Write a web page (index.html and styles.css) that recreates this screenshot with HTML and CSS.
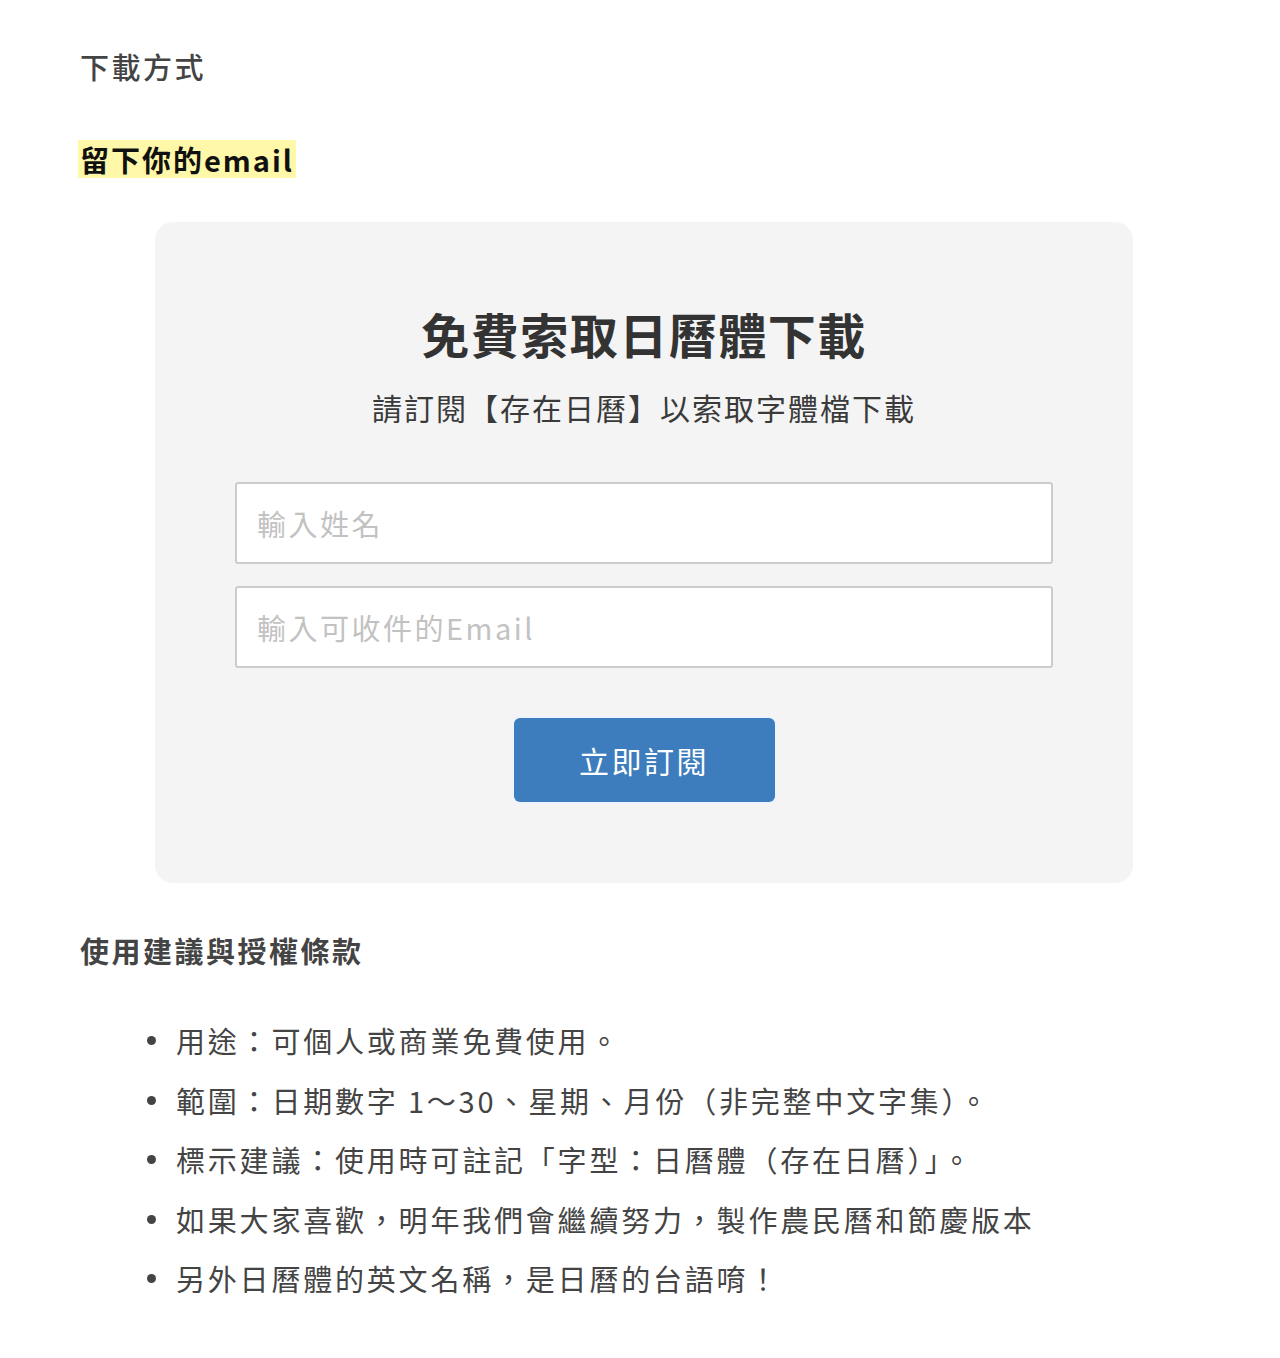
FILE: index.html
```html
<!DOCTYPE html>
<html lang="zh-Hant">
<head>
<meta charset="utf-8">
<title>下載方式</title>
<link rel="stylesheet" href="styles.css">
</head>
<body>
<main class="page">
  <h2 class="section-title">下載方式</h2>
  <p class="highlight-line"><mark class="highlight">留下你的email</mark></p>

  <section class="card">
    <h1 class="card-title">免費索取日曆體下載</h1>
    <p class="card-subtitle">請訂閱【存在日曆】以索取字體檔下載</p>
    <form class="form">
      <input class="field" type="text" placeholder="輸入姓名">
      <input class="field" type="email" placeholder="輸入可收件的Email">
      <button class="submit" type="button">立即訂閱</button>
    </form>
  </section>

  <h2 class="section-title terms-title">使用建議與授權條款</h2>
  <ul class="terms">
    <li>用途：可個人或商業免費使用。</li>
    <li>範圍：日期數字 1～30、星期、月份（非完整中文字集）。</li>
    <li>標示建議：使用時可註記「字型：日曆體（存在日曆）」。</li>
    <li>如果大家喜歡，明年我們會繼續努力，製作農民曆和節慶版本</li>
    <li>另外日曆體的英文名稱，是日曆的台語唷！</li>
  </ul>
</main>
</body>
</html>
```

FILE: styles.css
```css
* { box-sizing: border-box; }

html, body {
  margin: 0;
  padding: 0;
  background: #ffffff;
}

body {
  font-family: "Noto Sans CJK TC", "Noto Sans", sans-serif;
  color: #444444;
}

.page {
  width: 1280px;
  padding: 44px 72px 60px 80px;
}

.section-title {
  margin: 0;
  font-size: 29px;
  line-height: 45px;
  font-weight: 500;
  letter-spacing: 2.5px;
  color: #444444;
}

.highlight-line {
  margin: 51px 0 0;
  font-size: 29px;
  line-height: 38px;
  font-weight: 700;
  letter-spacing: 2px;
}

.highlight {
  display: inline-block;
  line-height: 38px;
  vertical-align: top;
  background: #fff8a8;
  color: #111111;
  padding: 0 2px;
  margin-left: -2px;
}

.card {
  margin: 44px 0 0 75px;
  width: 978px;
  background: #f4f4f4;
  border-radius: 18px;
  padding: 79px 80px 81px;
  text-align: center;
}

.card-title {
  margin: 0;
  font-size: 48px;
  line-height: 64px;
  font-weight: 700;
  letter-spacing: 1.5px;
  color: #333333;
}

.card-subtitle {
  margin: 20px 0 0;
  font-size: 30px;
  line-height: 45px;
  letter-spacing: 2px;
  color: #3a3a3a;
}

.form {
  margin-top: 52px;
  display: flex;
  flex-direction: column;
  align-items: center;
  gap: 22px;
}

.field {
  width: 818px;
  height: 82px;
  border: 2px solid #cccccc;
  border-radius: 3px;
  background: #ffffff;
  padding: 0 20px;
  font-family: "Noto Sans CJK TC", "Noto Sans", sans-serif;
  font-size: 29px;
  letter-spacing: 2.5px;
  color: #333333;
  outline: none;
}

.field::placeholder {
  color: #c2c2c2;
}

.submit {
  margin-top: 28px;
  width: 261px;
  height: 84px;
  border: none;
  border-radius: 6px;
  background: #3d7dbd;
  box-shadow: 0 0 0 2px #eef4fb;
  color: #ffffff;
  font-family: "Noto Sans CJK TC", "Noto Sans", sans-serif;
  font-size: 30px;
  letter-spacing: 2.5px;
  cursor: pointer;
}

.terms-title {
  margin-top: 45px;
  font-weight: 700;
}

.terms {
  list-style: none;
  margin: 45px 0 0;
  padding: 0 0 0 67px;
}

.terms li {
  display: flex;
  align-items: center;
  font-size: 29px;
  line-height: 45px;
  letter-spacing: 2.8px;
  color: #444444;
  margin-bottom: 14.5px;
}

.terms li::before {
  content: "";
  flex: none;
  width: 9px;
  height: 9px;
  border-radius: 50%;
  background: #444444;
  margin-right: 20px;
}
```
